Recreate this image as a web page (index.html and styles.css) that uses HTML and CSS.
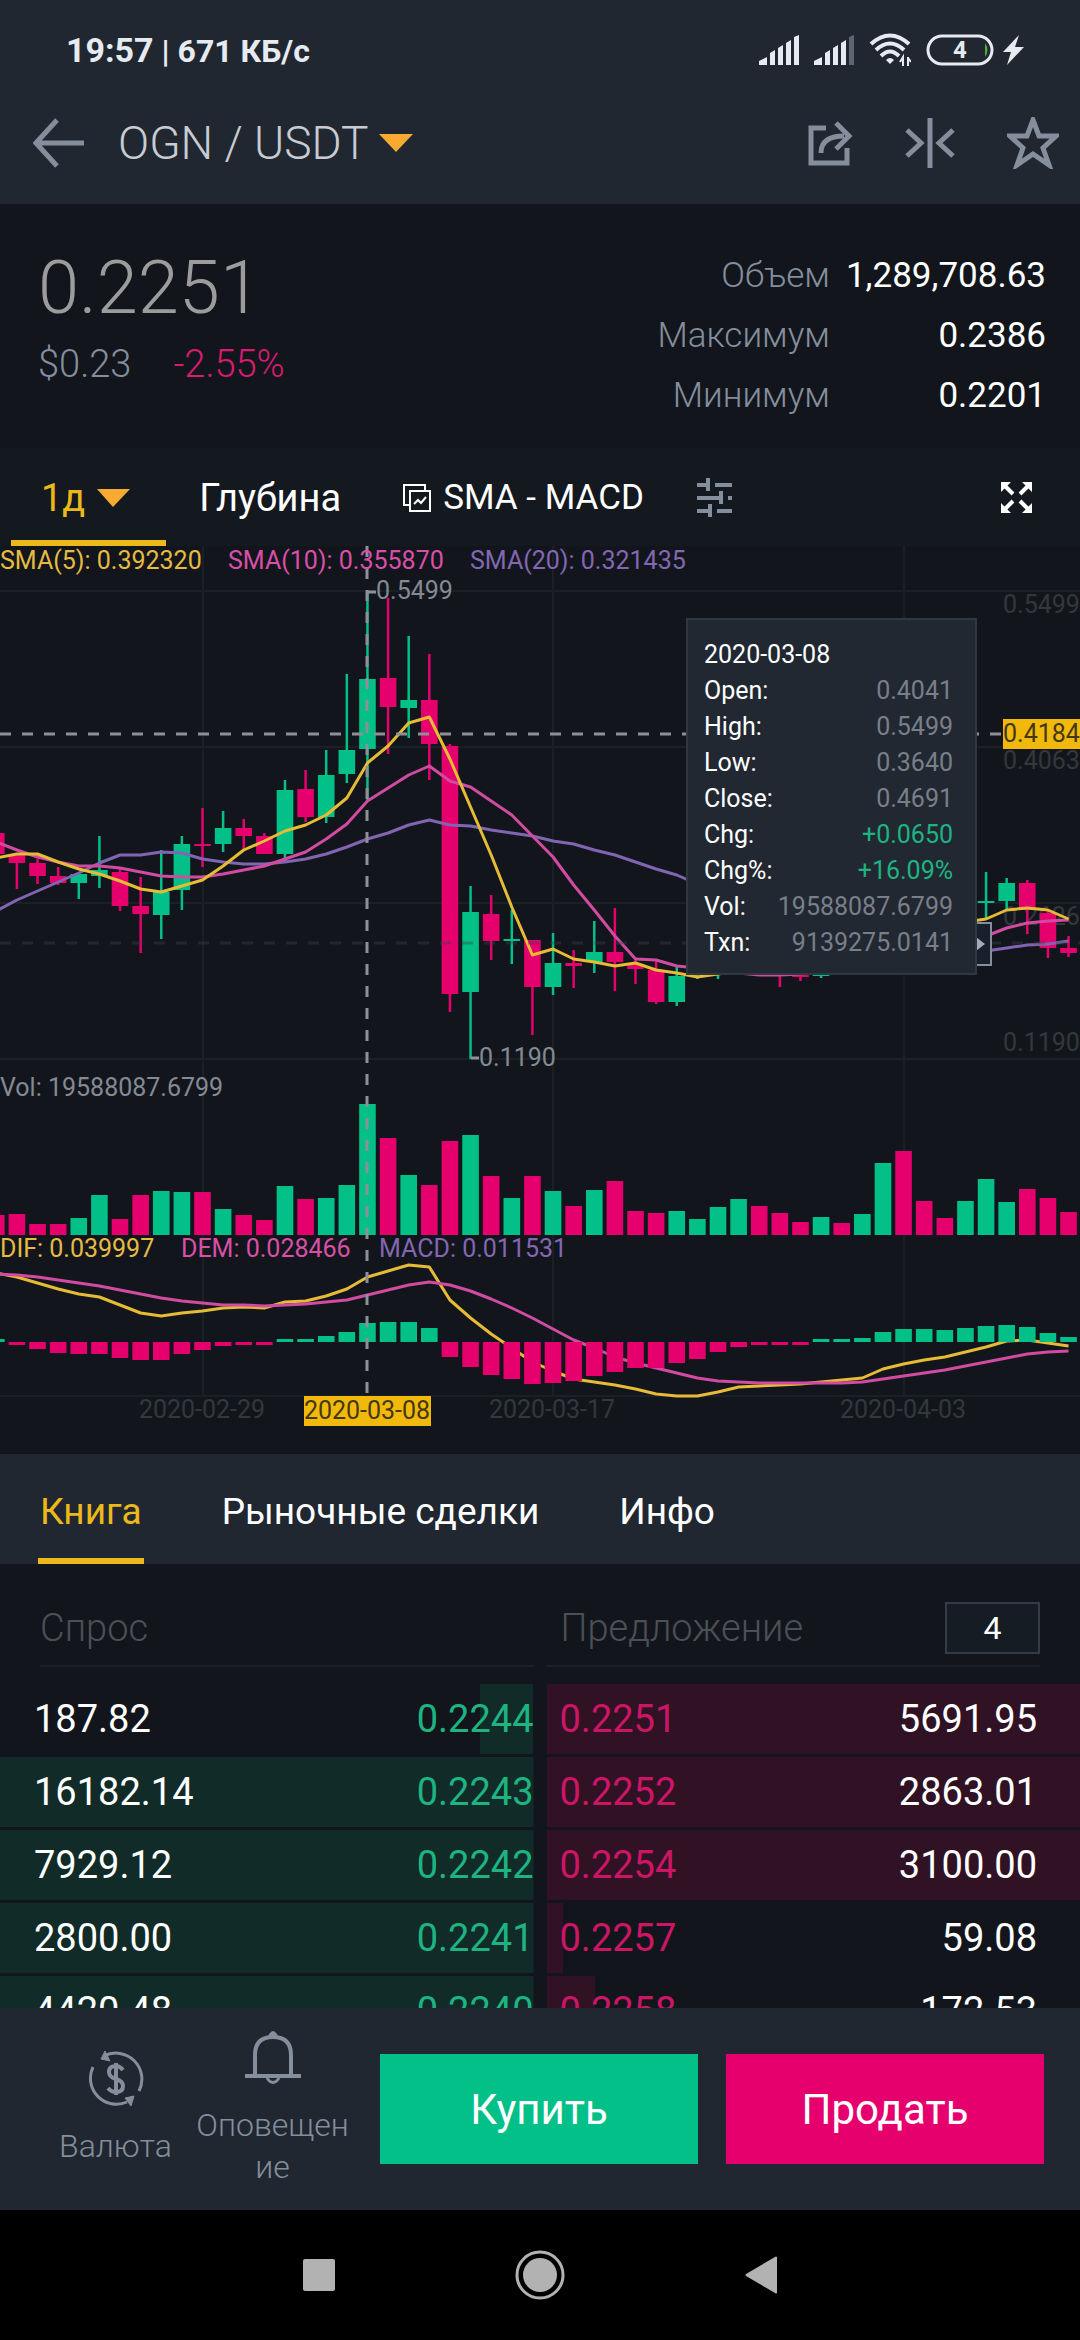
FILE: index.html
```html
<!DOCTYPE html>
<html lang="ru">
<head>
    <meta charset="UTF-8">
    <meta name="viewport" content="width=device-width, initial-scale=1.0">
    <title>OGN / USDT</title>
    <link rel="stylesheet" href="styles.css">
</head>
<body>
    <header class="header">
        <div class="status-bar">
            <div class="status-text"><span class="time">19:57</span> | 671 КБ/с</div>
            <div class="status-icons">
                <svg width="40" height="30" viewBox="0 0 40 30" fill="#e6eaf1">
                    <path d="M0 30v-4l8-4v8zM11 30V18l5-3v15zM19 30V13l5-3v20zM27 30V8l5-3v25zM35 30V2l5-2v30z"/>
                </svg>
                <svg width="40" height="30" viewBox="0 0 40 30" fill="#e6eaf1">
                    <path d="M0 30v-4l8-4v8zM11 30V18l5-3v15zM19 30V13l5-3v20zM27 30V8l5-3v25z"/>
                    <path d="M35 30V2l5-2v30z" fill="#5d6472"/>
                </svg>
                <svg width="42" height="34" viewBox="0 0 42 34" fill="none" stroke="#e6eaf1" stroke-width="4">
                    <path d="M2 11Q21-6 40 11M7 17Q21 4 35 17M12 23Q21 14 30 23"/>
                    <path d="M21 31l-4-4q4-4 8 0z" fill="#e6eaf1" stroke="none"/>
                    <path d="M34 33v-9l-3 5M39 24v9M39 25l3 4" stroke-width="2"/>
                </svg>
                <svg width="68" height="32" viewBox="0 0 68 32">
                    <rect x="2" y="2" width="64" height="28" rx="14" fill="none" stroke="#e6eaf1" stroke-width="3"/>
                    <path d="M59 9q5 7 0 14z" fill="#4fae33"/>
                    <text class="battery-text" x="34" y="24">4</text>
                </svg>
                <svg class="bolt" width="21" height="30" viewBox="0 0 21 30" fill="#e6eaf1">
                    <path d="M16 0L0 17h8L4 30l17-18h-9z"/>
                </svg>
            </div>
        </div>
        <div class="title-bar">
            <button class="icon-btn" aria-label="Назад">
                <svg width="52" height="50" viewBox="0 0 52 50" fill="none" stroke="#848e9c" stroke-width="5">
                    <path d="M51 25H4M24 2L3 25l21 23"/>
                </svg>
            </button>
            <button class="pair">
                <span>OGN / USDT</span>
                <svg width="34" height="18" viewBox="0 0 34 18"><path d="M0 0h34L17 18z" fill="#f9aa33"/></svg>
            </button>
            <div class="title-actions">
                <button class="icon-btn" aria-label="Поделиться">
                    <svg width="46" height="50" viewBox="0 0 46 50" fill="none" stroke="#848e9c" stroke-width="5">
                        <path d="M19 10H4v35h36V30"/>
                        <path d="M14 35Q14 18 37 18"/>
                        <path d="M29 5l13 13-13 13"/>
                    </svg>
                </button>
                <button class="icon-btn" aria-label="Сравнить">
                    <svg width="50" height="50" viewBox="0 0 50 50" fill="none" stroke="#848e9c" stroke-width="5">
                        <path d="M25 0v50M2 12l14 13L2 38M48 12L34 25l14 13"/>
                    </svg>
                </button>
                <button class="icon-btn" aria-label="Избранное">
                    <svg width="52" height="52" viewBox="0 0 52 52" fill="none" stroke="#848e9c" stroke-width="5">
                        <path d="M26 3l6 16h17L36 31l6 17-16-11-16 11 6-17L3 19h17z"/>
                    </svg>
                </button>
            </div>
        </div>
    </header>

    <section class="summary">
        <div>
            <div class="price">0.2251</div>
            <div class="price-sub"><span>$0.23</span><span class="change">-2.55%</span></div>
        </div>
        <dl class="stats">
            <dt>Объем</dt><dd>1,289,708.63</dd>
            <dt>Максимум</dt><dd>0.2386</dd>
            <dt>Минимум</dt><dd>0.2201</dd>
        </dl>
    </section>

    <nav class="chart-tabs">
        <button class="chart-tab interval active">
            <span>1д</span>
            <svg width="33" height="18" viewBox="0 0 33 18"><path d="M0 0h33L16 18z" fill="#f9aa33"/></svg>
        </button>
        <button class="chart-tab">Глубина</button>
        <button class="chart-tab indicator">
            <svg width="28" height="28" viewBox="0 0 28 28" fill="none" stroke="#fff" stroke-width="2">
                <path d="M6 21H1V1h21v5"/>
                <path d="M7 7h20v20H7z"/>
                <path d="M11 20l4-4 3 3 5-6"/>
            </svg>
            <span>SMA - MACD</span>
        </button>
        <button class="chart-tab settings" aria-label="Настройки">
            <svg width="35" height="39" viewBox="0 0 35 39" fill="none" stroke="#848e9c" stroke-width="4">
                <path d="M0 7h13M18 7h17M0 20h26M31 20h4M0 33h15M20 33h15"/>
                <path d="M11 0v13M24 13v13M13 26v13"/>
            </svg>
        </button>
        <button class="chart-tab fullscreen" aria-label="Во весь экран">
            <svg width="31" height="31" viewBox="0 0 31 31" fill="#fff" stroke="#fff">
                <path d="M0 0h10L0 10zM31 0v10L21 0zM0 31V21l10 10zM31 31H21l10-10z" stroke="none"/>
                <path d="M4 4l8 8M27 4l-8 8M4 27l8-8M27 27l-8-8" stroke-width="4"/>
            </svg>
        </button>
    </nav>

    <section class="chart">
        <svg id="chart" class="chart-svg" viewBox="0 0 1080 908">
            <path class="grid" d="M203 0V850M553 0V850M904 0V850M0 45H1080M0 201H1080M0 357H1080M0 513H1080M0 850H1080"/>
            <g class="axis">
                <text x="1003" y="67">0.5499</text>
                <text x="1003" y="223">0.4063</text>
                <text x="1003" y="379">0.2626</text>
                <text x="1003" y="505">0.1190</text>
                <text class="mid" x="202" y="872">2020-02-29</text>
                <text class="mid" x="552" y="872">2020-03-17</text>
                <text class="mid" x="903" y="872">2020-04-03</text>
            </g>
            <g id="plot"></g>
            <path class="last-price" d="M0 397H1080"/>
            <path class="cross" d="M0 188H1003M367 0V847"/>
            <path class="tick" d="M367 46h9M471 512h8"/>
            <g class="muted">
                <text x="376" y="53">0.5499</text>
                <text x="479" y="520">0.1190</text>
                <text x="0" y="550">Vol: 19588087.6799</text>
            </g>
            <text class="yellow" x="0" y="23">SMA(5): 0.392320</text>
            <text class="pink" x="228" y="23">SMA(10): 0.355870</text>
            <text class="violet" x="470" y="23">SMA(20): 0.321435</text>
            <text class="yellow" x="0" y="711">DIF: 0.039997</text>
            <text class="pink" x="181" y="711">DEM: 0.028466</text>
            <text class="violet" x="379" y="711">MACD: 0.011531</text>
            <rect class="tag" x="1003" y="173" width="77" height="30"/>
            <text class="tag-text" x="1003" y="196">0.4184</text>
            <rect class="tag" x="304" y="850" width="127" height="30"/>
            <text class="tag-text mid" x="367" y="873">2020-03-08</text>
            <rect x="960" y="377" width="31" height="42" fill="#18202d" stroke="#848e9c" stroke-width="2"/>
            <path d="M976 391l9 7-9 7z" fill="#a4abb6"/>
        </svg>
        <div class="tooltip">
            <div class="tooltip-date">2020-03-08</div>
            <dl class="tooltip-list">
                <dt>Open:</dt><dd>0.4041</dd>
                <dt>High:</dt><dd>0.5499</dd>
                <dt>Low:</dt><dd>0.3640</dd>
                <dt>Close:</dt><dd>0.4691</dd>
                <dt>Chg:</dt><dd class="up">+0.0650</dd>
                <dt>Chg%:</dt><dd class="up">+16.09%</dd>
                <dt>Vol:</dt><dd>19588087.6799</dd>
                <dt>Txn:</dt><dd>9139275.0141</dd>
            </dl>
        </div>
    </section>

    <nav class="book-tabs">
        <button class="book-tab active">Книга</button>
        <button class="book-tab">Рыночные сделки</button>
        <button class="book-tab">Инфо</button>
    </nav>

    <main class="book">
        <div class="book-head">
            <div class="book-title bid-title" id="bids">Спрос</div>
            <div class="book-title ask-title">
                <label for="precision" id="asks">Предложение</label>
                <select id="precision" class="precision">
                    <option>4</option>
                    <option>3</option>
                    <option>2</option>
                </select>
            </div>
        </div>
        <div class="book-body">
            <table class="side bids" aria-labelledby="bids">
                <tbody>
                    <tr style="--depth: 10%"><td>187.82</td><td class="up">0.2244</td></tr>
                    <tr style="--depth: 100%"><td>16182.14</td><td class="up">0.2243</td></tr>
                    <tr style="--depth: 100%"><td>7929.12</td><td class="up">0.2242</td></tr>
                    <tr style="--depth: 100%"><td>2800.00</td><td class="up">0.2241</td></tr>
                    <tr style="--depth: 100%"><td>4420.48</td><td class="up">0.2240</td></tr>
                </tbody>
            </table>
            <table class="side asks" aria-labelledby="asks">
                <tbody>
                    <tr style="--depth: 100%"><td class="down">0.2251</td><td>5691.95</td></tr>
                    <tr style="--depth: 100%"><td class="down">0.2252</td><td>2863.01</td></tr>
                    <tr style="--depth: 100%"><td class="down">0.2254</td><td>3100.00</td></tr>
                    <tr style="--depth: 3%"><td class="down">0.2257</td><td>59.08</td></tr>
                    <tr style="--depth: 9%"><td class="down">0.2258</td><td>172.53</td></tr>
                </tbody>
            </table>
        </div>
    </main>

    <footer class="actions">
        <button class="action">
            <svg width="56" height="56" viewBox="0 0 56 56" fill="none" stroke="#848e9c" stroke-width="3">
                <path d="M16 5A26 26 0 0 1 51 40M5 16A26 26 0 0 0 39 51"/>
                <path d="M17 0l-4 8 9 2zM37 47l9-2-3 10z" fill="#848e9c" stroke-width="1"/>
                <path d="M35 19q-3-4-7-4-7 0-7 6 0 5 7 7t7 7q0 6-7 6-5 0-8-4M28 12v32" stroke-width="4"/>
            </svg>
            <span>Валюта</span>
        </button>
        <button class="action">
            <svg width="56" height="56" viewBox="0 0 56 56" fill="none" stroke="#848e9c" stroke-width="4">
                <path d="M10 46V25Q10 7 28 7t18 18v21M0 46h56"/>
                <path d="M22 48q6 9 12 0" stroke-width="3"/>
                <path d="M23 6q5-10 10 0z" fill="#848e9c" stroke="none"/>
            </svg>
            <span>Оповещение</span>
        </button>
        <button class="trade buy">Купить</button>
        <button class="trade sell">Продать</button>
    </footer>

    <nav class="system-nav">
        <svg width="32" height="32" viewBox="0 0 32 32"><rect width="32" height="32" rx="2" fill="#b2b2b2"/></svg>
        <svg width="50" height="50" viewBox="0 0 50 50">
            <circle cx="25" cy="25" r="23" fill="none" stroke="#b2b2b2" stroke-width="3"/>
            <circle cx="25" cy="25" r="17" fill="#b2b2b2"/>
        </svg>
        <svg width="32" height="38" viewBox="0 0 32 38"><path d="M32 1v36q-1 1-2 0L1 20q-1-1 0-2L30 1q1-1 2 0z" fill="#b2b2b2"/></svg>
    </nav>

    <script src="chart.js"></script>
</body>
</html>
```
FILE: styles.css
```css
* {
    box-sizing: border-box;
}

body {
    margin: 0;
    height: 100vh;
    display: flex;
    flex-direction: column;
    overflow: hidden;
    background-color: #12161c;
    color: #ffffff;
    font-family: Roboto, 'Noto Sans', sans-serif;
    font-size: 38px;
}

button {
    padding: 0;
    border: none;
    background: none;
    color: inherit;
    font: inherit;
    cursor: pointer;
}

svg {
    display: block;
    flex-shrink: 0;
}

dl, dd {
    margin: 0;
}

.up {
    color: #1eb482;
}

.down {
    color: #cc1665;
}

/* Header */
.header {
    flex-shrink: 0;
    height: 204px;
    background-color: #202731;
}

.status-bar {
    display: flex;
    justify-content: space-between;
    align-items: center;
    height: 100px;
    padding: 0 56px 0 66px;
    color: #e6eaf1;
    font-size: 32px;
    font-weight: 700;
}

.time {
    font-size: 34px;
}

.status-icons {
    display: flex;
    align-items: center;
    gap: 15px;
}

.bolt {
    margin-left: -6px;
}

.battery-text {
    fill: #e6eaf1;
    font-size: 24px;
    text-anchor: middle;
}

.title-bar {
    display: flex;
    align-items: center;
    height: 86px;
    padding: 0 21px 0 33px;
}

.pair {
    display: flex;
    align-items: center;
    gap: 10px;
    margin-left: 33px;
    color: #c8ccd2;
    font-size: 46px;
    font-weight: 300;
}

.title-actions {
    display: flex;
    align-items: center;
    gap: 52px;
    margin-left: auto;
}

/* Price */
.summary {
    display: flex;
    justify-content: space-between;
    flex-shrink: 0;
    height: 244px;
    padding: 42px 34px 0 38px;
    font-weight: 300;
}

.price {
    margin-bottom: 10px;
    color: #9c9c9c;
    font-size: 74px;
    line-height: 84px;
}

.price-sub {
    display: flex;
    gap: 42px;
    color: #848e9c;
    font-size: 38px;
    line-height: 48px;
}

.change {
    color: #d81b6f;
}

.stats {
    display: grid;
    grid-template-columns: auto auto;
    column-gap: 16px;
    align-content: start;
    font-size: 35px;
    line-height: 60px;
    text-align: right;
}

.stats dt {
    color: #848e9c;
}

.stats dd {
    font-weight: 400;
}

/* Chart tabs */
.chart-tabs {
    display: flex;
    flex-shrink: 0;
    height: 98px;
    padding: 0 48px 0 11px;
    background-color: #14181f;
}

.chart-tab {
    display: flex;
    align-items: center;
    gap: 12px;
    height: 98px;
    padding-top: 7px;
    border-bottom: 6px solid transparent;
    margin-right: 62px;
}

.chart-tab.active {
    border-bottom-color: #ecb91b;
    color: #ecb91b;
}

.interval {
    padding-left: 30px;
    padding-right: 36px;
    margin-right: 33px;
}

.indicator {
    font-size: 35px;
    margin-right: 53px;
}

.fullscreen {
    margin-left: auto;
    margin-right: 0;
}

/* Chart */
.chart {
    position: relative;
    flex-shrink: 0;
}

.chart-svg {
    width: 100%;
    font-size: 25px;
}

.mid {
    text-anchor: middle;
}

.grid {
    fill: none;
    stroke: #1b2026;
    stroke-width: 2;
}

.axis {
    fill: #33383c;
}

.muted {
    fill: #848a94;
}

.yellow {
    fill: #e6bb41;
}

.pink {
    fill: #d94fa8;
}

.violet {
    fill: #8267b3;
}

.line-yellow, .line-pink, .line-violet {
    fill: none;
    stroke-width: 3;
    stroke-linejoin: round;
}

.line-yellow {
    stroke: #e6bb35;
}

.line-pink {
    stroke: #d14ba2;
}

.line-violet {
    stroke: #8165b2;
}

.bar-up {
    fill: #02c087;
}

.bar-down {
    fill: #e5006d;
}

.cross {
    fill: none;
    stroke: #8d9197;
    stroke-width: 3;
    stroke-dasharray: 11;
}

.last-price {
    stroke: #3c4248;
    stroke-opacity: 0.4;
    stroke-width: 3;
    stroke-dasharray: 11;
}

.tick {
    stroke: #8d9197;
    stroke-width: 3;
}

.tag {
    fill: #f0b90b;
}

.tag-text {
    fill: #443813;
}

.tooltip {
    position: absolute;
    top: 72px;
    right: 103px;
    width: 291px;
    padding: 17px 22px 12px 16px;
    border: 2px solid #2d383f;
    background-color: #212832;
    font-size: 25px;
    line-height: 36px;
}

.tooltip-list {
    display: grid;
    grid-template-columns: auto 1fr;
}

.tooltip-list dd {
    color: #797f89;
    text-align: right;
}

.tooltip-list .up {
    color: #1eb482;
}

/* Order book */
.book-tabs {
    display: flex;
    flex-shrink: 0;
    gap: 76px;
    height: 110px;
    padding-left: 38px;
    background-color: #202731;
}

.book-tab {
    padding: 10px 2px 0;
    border-bottom: 6px solid transparent;
    font-size: 37px;
}

.book-tab.active {
    border-bottom-color: #ecb91b;
    color: #ecb91b;
}

.book {
    flex: 1;
    min-height: 0;
    overflow: hidden;
}

.book-head, .book-body {
    display: grid;
    grid-template-columns: 1fr 1fr;
    column-gap: 13px;
}

.book-head {
    padding: 26px 40px 0;
    margin-bottom: 17px;
}

.book-title {
    display: flex;
    align-items: center;
    justify-content: space-between;
    height: 77px;
    border-bottom: 2px solid #1d2126;
    color: #4b5057;
    font-weight: 300;
}

.ask-title {
    padding-left: 14px;
}

.precision {
    width: 95px;
    height: 52px;
    appearance: none;
    border: 2px solid #343c47;
    border-radius: 0;
    background-color: #151c24;
    color: #ffffff;
    font: 400 32px Roboto, sans-serif;
    text-align: center;
    text-align-last: center;
}

.side {
    display: block;
    border-collapse: collapse;
}

.side tbody {
    display: grid;
    row-gap: 3px;
}

.side tr {
    display: flex;
    justify-content: space-between;
    align-items: center;
    height: 70px;
    background-repeat: no-repeat;
    background-size: var(--depth) 100%;
}

.side td {
    padding: 0;
}

.bids tr {
    padding-left: 34px;
    background-image: linear-gradient(#112b28, #112b28);
    background-position: right;
}

.asks tr {
    padding: 0 43px 0 13px;
    background-image: linear-gradient(#301224, #301224);
    background-position: left;
}

/* Bottom bar */
.actions {
    display: flex;
    align-items: center;
    flex-shrink: 0;
    height: 202px;
    padding: 0 36px 0 37px;
    background-color: #202731;
}

.action {
    display: flex;
    flex-direction: column;
    align-items: center;
    gap: 18px;
    width: 157px;
    color: #848e9c;
    font-size: 32px;
    font-weight: 300;
    line-height: 42px;
    word-break: break-all;
}

.trade {
    flex: 1;
    height: 110px;
    font-size: 42px;
}

.buy {
    margin-left: 29px;
    background-color: #02c087;
}

.sell {
    margin-left: 28px;
    background-color: #e5006d;
}

.system-nav {
    display: flex;
    justify-content: center;
    align-items: center;
    flex-shrink: 0;
    gap: 180px;
    height: 130px;
    background-color: #000000;
}
```
FILE: chart.js
```js
var plot = document.getElementById("plot");
var STEP = 20.62;
var START = -3.7;
var VOL_BASE = 689;
var MACD_BASE = 796;

// direction, high, body top, body bottom, low
var candles = [
    ["r", 287, 287, 308, 308], ["r", 308, 308, 317, 343], ["r", 313, 317, 330, 338], ["r", 321, 330, 337, 339],
    ["g", 327, 328, 337, 353], ["g", 290, 324, 330, 342], ["r", 323, 326, 360, 365], ["r", 331, 360, 368, 407],
    ["g", 304, 346, 369, 393], ["g", 290, 298, 344, 364], ["r", 262, 298, 300, 321], ["g", 265, 282, 298, 306],
    ["r", 273, 282, 290, 304], ["r", 287, 290, 308, 308], ["g", 234, 244, 308, 317], ["r", 224, 243, 271, 276],
    ["g", 204, 229, 271, 277], ["g", 128, 204, 228, 237], ["g", 45, 133, 203, 256], ["r", 52, 132, 161, 208],
    ["g", 90, 154, 162, 192], ["r", 108, 154, 198, 234], ["r", 198, 200, 448, 466], ["g", 340, 366, 446, 513],
    ["r", 349, 368, 395, 414], ["g", 364, 393, 395, 418], ["r", 394, 394, 441, 489], ["g", 387, 417, 441, 449],
    ["r", 404, 417, 420, 442], ["g", 375, 406, 416, 427], ["r", 362, 406, 416, 445], ["r", 411, 418, 423, 438],
    ["r", 414, 424, 456, 458], ["g", 421, 430, 456, 460], ["g", 418, 424, 428, 433], ["g", 412, 418, 427, 433],
    ["g", 400, 408, 418, 424], ["r", 398, 408, 420, 426], ["r", 402, 414, 424, 441], ["r", 410, 420, 431, 435],
    ["g", 412, 421, 430, 432], ["r", 410, 418, 422, 427], ["g", 400, 408, 420, 424], ["g", 360, 386, 408, 412],
    ["r", 350, 386, 396, 404], ["r", 380, 394, 398, 406], ["r", 384, 390, 396, 400], ["g", 352, 360, 390, 394],
    ["g", 326, 355, 357, 373], ["g", 332, 337, 355, 364], ["r", 334, 337, 364, 388], ["r", 364, 367, 402, 412],
    ["r", 390, 402, 407, 411]
];

var sma5 = [312, 308, 308, 316, 323, 328, 335, 343, 346, 340, 334, 320, 304, 295, 285, 279, 269, 252, 217, 200, 177, 171, 213, 261, 309, 361, 409, 403, 413, 416, 420, 417, 424, 427, 431, 428, 425, 424, 423, 424, 424, 422, 418, 412, 404, 395, 386, 376, 373, 364, 362, 364, 373];
var sma10 = [296, 304, 311, 316, 320, 320, 322, 326, 330, 331, 331, 328, 324, 320, 313, 306, 293, 278, 255, 242, 229, 220, 235, 241, 255, 269, 290, 311, 339, 364, 390, 413, 414, 420, 422, 424, 427, 429, 429, 428, 426, 424, 421, 417, 412, 407, 401, 395, 390, 382, 377, 375, 374];
var sma20 = [365, 354, 345, 336, 327, 317, 309, 309, 306, 307, 313, 316, 318, 318, 316, 313, 308, 301, 293, 287, 279, 274, 279, 280, 284, 287, 290, 295, 298, 304, 309, 316, 323, 329, 338, 345, 353, 361, 369, 377, 384, 390, 395, 399, 402, 405, 406, 406, 405, 402, 399, 398, 395];
var volume = [20, 21, 11, 11, 17, 40, 16, 40, 44, 43, 43, 26, 20, 15, 49, 36, 37, 50, 131, 97, 60, 50, 94, 100, 59, 37, 59, 44, 29, 45, 54, 24, 22, 24, 16, 28, 36, 29, 22, 13, 18, 12, 21, 72, 84, 34, 17, 34, 56, 33, 46, 37, 23];
var macd = [3, -3, -7, -11, -12, -12, -16, -18, -18, -12, -8, -4, -3, -3, 3, 3, 6, 10, 19, 20, 20, 14, -15, -25, -33, -37, -42, -41, -39, -34, -30, -26, -26, -21, -17, -10, -5, -3, -3, -3, 3, 3, 4, 10, 13, 13, 12, 14, 16, 17, 15, 9, 5];
var dif = [727, 731, 737, 743, 748, 751, 759, 767, 770, 767, 765, 762, 761, 762, 756, 755, 750, 743, 731, 725, 719, 721, 754, 772, 788, 802, 816, 825, 833, 836, 839, 843, 848, 850, 850, 846, 841, 840, 839, 838, 836, 834, 832, 823, 818, 814, 811, 806, 801, 795, 794, 797, 800];
var dem = [728, 729, 731, 734, 737, 740, 744, 748, 752, 755, 757, 759, 759, 760, 759, 758, 756, 754, 749, 744, 739, 736, 739, 745, 753, 762, 772, 783, 794, 802, 811, 817, 822, 827, 832, 835, 836, 837, 837, 837, 837, 837, 836, 833, 830, 827, 824, 820, 816, 812, 808, 806, 805];

function add(name, attrs) {
    var el = document.createElementNS("http://www.w3.org/2000/svg", name);
    for (var key in attrs) {
        el.setAttribute(key, attrs[key]);
    }
    plot.appendChild(el);
}

function bar(i, y, height, width, up) {
    add("rect", {
        x: START + STEP * i - width / 2,
        y: y,
        width: width,
        height: height,
        class: up ? "bar-up" : "bar-down"
    });
}

function line(values, className) {
    var points = values.map(function(y, i) {
        return (START + STEP * i) + "," + y;
    });
    add("polyline", { points: points.join(" "), class: className });
}

candles.forEach(function(c, i) {
    var up = c[0] === "g";
    bar(i, c[1], c[4] - c[1], 2.5, up);
    bar(i, c[2], c[3] - c[2], 16.6, up);
    bar(i, VOL_BASE - volume[i], volume[i], 16.6, up);
});
line(sma20, "line-violet");
line(sma10, "line-pink");
line(sma5, "line-yellow");

line(dif, "line-yellow");
line(dem, "line-pink");
macd.forEach(function(value, i) {
    bar(i, value > 0 ? MACD_BASE - value : MACD_BASE, Math.abs(value), 16.6, value > 0);
});
```
